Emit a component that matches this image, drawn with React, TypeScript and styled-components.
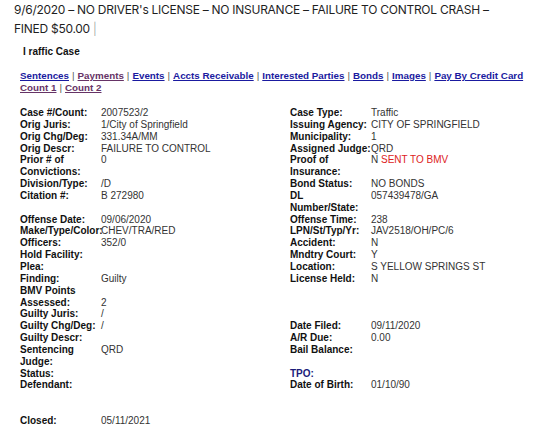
import React from "react";
import styled, { createGlobalStyle } from "styled-components";

const Global = createGlobalStyle`
  html, body { margin: 0; padding: 0; background: #fff; }
  body { font-family: "Liberation Sans", Arial, sans-serif; }
`;

const Page = styled.div`
  width: 544px;
  min-height: 431px;
  box-sizing: border-box;
`;

const Headline = styled.div`
  padding: 0 14px;
  font-family: Inter, "Liberation Sans", sans-serif;
  font-size: 12px;
  line-height: 19px;
  color: #1f1f1f;
  letter-spacing: -0.27px;
`;

const Caret = styled.span`
  color: #999;
  font-weight: 300;
`;

const CaseTitle = styled.div`
  margin-top: 8px;
  padding-left: 23px;
  font-size: 10px;
  font-weight: bold;
  line-height: 12px;
  color: #111;
`;

const Nav = styled.div`
  margin-top: 12px;
  padding-left: 20px;
  font-size: 9.8px;
  font-weight: bold;
  line-height: 11.5px;
  color: #333;
`;

const NavLink = styled.a<{ $visited?: boolean }>`
  color: ${(p) => (p.$visited ? "#663366" : "#1a1aa0")};
  text-decoration: underline;
  cursor: pointer;
`;

const Sep = styled.span`
  color: #555;
  font-weight: normal;
  margin: 0 3px;
`;

const Grid = styled.div`
  margin-top: 14px;
  padding-left: 20px;
  display: grid;
  grid-template-columns: 81px 189px 81px 1fr;
  font-size: 10px;
  line-height: 11.85px;
  color: #222;
`;

const Label = styled.div<{ $color?: string }>`
  font-weight: bold;
  color: ${(p) => p.$color || "#111"};
  white-space: pre-line;
`;

const LabelNoWrap = styled(Label)`
  white-space: nowrap;
`;

const Value = styled.div<{ $bottom?: boolean }>`
  color: #333;
  align-self: ${(p) => (p.$bottom ? "end" : "start")};
`;

const Red = styled.span`
  color: #d22;
`;

const Spacer = styled.div<{ $lines: number }>`
  grid-column: 1 / -1;
  height: ${(p) => p.$lines * 11.85}px;
`;

type Cell = { label?: React.ReactNode; value?: React.ReactNode; nowrap?: boolean; color?: string; bottom?: boolean };
type Row = [Cell, Cell];

const rows: Row[] = [
  [{ label: "Case #/Count:", value: "2007523/2" }, { label: "Case Type:", value: "Traffic" }],
  [{ label: "Orig Juris:", value: "1/City of Springfield" }, { label: "Issuing Agency:", value: "CITY OF SPRINGFIELD", nowrap: true }],
  [{ label: "Orig Chg/Deg:", value: "331.34A/MM" }, { label: "Municipality:", value: "1" }],
  [{ label: "Orig Descr:", value: "FAILURE TO CONTROL" }, { label: "Assigned Judge:", value: "QRD", nowrap: true }],
  [{ label: "Prior # of\nConvictions:", value: "0" }, { label: "Proof of\nInsurance:", value: <>N <Red>SENT TO BMV</Red></> }],
  [{ label: "Division/Type:", value: "/D" }, { label: "Bond Status:", value: "NO BONDS" }],
  [{ label: "Citation #:", value: "B 272980" }, { label: "DL\nNumber/State:", value: "057439478/GA" }],
  [{ label: "Offense Date:", value: "09/06/2020" }, { label: "Offense Time:", value: "238" }],
  [{ label: "Make/Type/Color:", value: "CHEV/TRA/RED", nowrap: true }, { label: "LPN/St/Typ/Yr:", value: "JAV2518/OH/PC/6" }],
  [{ label: "Officers:", value: "352/0" }, { label: "Accident:", value: "N" }],
  [{ label: "Hold Facility:" }, { label: "Mndtry Court:", value: "Y" }],
  [{ label: "Plea:" }, { label: "Location:", value: "S YELLOW SPRINGS ST" }],
  [{ label: "Finding:", value: "Guilty" }, { label: "License Held:", value: "N" }],
  [{ label: "BMV Points\nAssessed:", value: "2", bottom: true }, {}],
  [{ label: "Guilty Juris:", value: "/" }, {}],
  [{ label: "Guilty Chg/Deg:", value: "/" }, { label: "Date Filed:", value: "09/11/2020" }],
  [{ label: "Guilty Descr:" }, { label: "A/R Due:", value: "0.00" }],
  [{ label: "Sentencing\nJudge:", value: "QRD" }, { label: "Bail Balance:" }],
  [{ label: "Status:" }, { label: "TPO:", color: "#1c1c7a" }],
  [{ label: "Defendant:" }, { label: "Date of Birth:", value: "01/10/90" }],
];

function renderCell(c: Cell, key: string) {
  const L = c.nowrap ? LabelNoWrap : Label;
  return (
    <React.Fragment key={key}>
      <L $color={c.color}>{c.label}</L>
      <Value $bottom={c.bottom}>{c.value}</Value>
    </React.Fragment>
  );
}

const links: { text: string; visited?: boolean }[] = [
  { text: "Sentences" },
  { text: "Payments", visited: true },
  { text: "Events" },
  { text: "Accts Receivable" },
  { text: "Interested Parties" },
  { text: "Bonds" },
  { text: "Images" },
  { text: "Pay By Credit Card" },
];

export default function App() {
  return (
    <Page>
      <Global />
      <Headline>
        9/6/2020 – NO DRIVER's LICENSE – NO INSURANCE – FAILURE TO CONTROL CRASH –<br />
        FINED $50.00 <Caret>|</Caret>
      </Headline>
      <CaseTitle>I raffic Case</CaseTitle>
      <Nav>
        {links.map((l, i) => (
          <React.Fragment key={l.text}>
            {i > 0 && <Sep>|</Sep>}
            <NavLink $visited={l.visited}>{l.text}</NavLink>
          </React.Fragment>
        ))}
        <br />
        <NavLink $visited>Count 1</NavLink>
        <Sep>|</Sep>
        <NavLink $visited>Count 2</NavLink>
      </Nav>
      <Grid>
        {rows.map((r, i) => (
          <React.Fragment key={i}>
            {renderCell(r[0], `l${i}`)}
            {renderCell(r[1], `r${i}`)}
          </React.Fragment>
        ))}
        <Spacer $lines={2} />
        {renderCell({ label: "Closed:", value: "05/11/2021" }, "closed")}
        <Label />
        <Value />
      </Grid>
    </Page>
  );
}
